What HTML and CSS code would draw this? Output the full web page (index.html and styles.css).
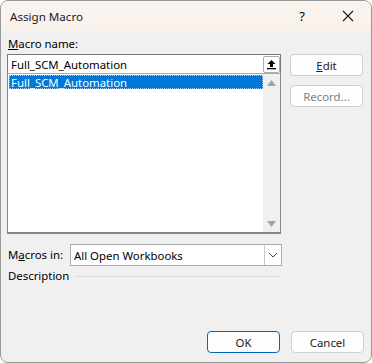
FILE: index.html
```html
<!DOCTYPE html>
<html lang="en">
<head>
    <meta charset="UTF-8">
    <title>Assign Macro</title>
    <link rel="stylesheet" href="styles.css">
</head>
<body>
    <div class="window">
        <div class="titlebar">
            <span class="title">Assign Macro</span>
            <span class="help">?</span>
            <span class="close">
                <svg width="12" height="12" viewBox="0 0 12 12">
                    <path d="M1 1 L11 11 M11 1 L1 11" stroke="#1a1a1a" stroke-width="1.1" fill="none"/>
                </svg>
            </span>
        </div>

        <div class="content">
            <div class="main">
                <div class="left">
                    <div class="label"><u>M</u>acro name:</div>
                    <div class="textbox">
                        <span class="value">Full_SCM_Automation</span>
                        <span class="up-btn">
                            <svg width="11" height="11" viewBox="0 0 11 11">
                                <path d="M5.5 1 L1.5 5 H4 V8 H7 V5 H9.5 Z" fill="#000"/>
                                <rect x="1" y="9" width="9" height="1.3" fill="#000"/>
                            </svg>
                        </span>
                    </div>
                    <div class="listbox">
                        <div class="items">
                            <div class="item selected"><span>Full_SCM_Automation</span></div>
                        </div>
                        <div class="scrollbar">
                            <svg width="9" height="6" viewBox="0 0 9 6"><path d="M4.5 0 L9 6 H0 Z" fill="#a3a3a3"/></svg>
                            <svg width="9" height="6" viewBox="0 0 9 6"><path d="M0 0 H9 L4.5 6 Z" fill="#a3a3a3"/></svg>
                        </div>
                    </div>
                </div>
                <div class="right">
                    <button class="btn"><u>E</u>dit</button>
                    <button class="btn disabled">Record...</button>
                </div>
            </div>

            <div class="macros-in">
                <span class="label">M<u>a</u>cros in:</span>
                <div class="select">
                    <span class="value">All Open Workbooks</span>
                    <span class="drop">
                        <svg width="10" height="6" viewBox="0 0 10 6"><path d="M1 1 L5 5 L9 1" stroke="#444" stroke-width="1" fill="none"/></svg>
                    </span>
                </div>
            </div>

            <div class="description">
                <span class="label">Description</span>
                <span class="rule"></span>
            </div>

            <div class="footer">
                <button class="btn default">OK</button>
                <button class="btn">Cancel</button>
            </div>
        </div>
    </div>
</body>
</html>
```

FILE: styles.css
```css
html, body {
    margin: 0;
    padding: 0;
    background-color: #ffffff;
}

body {
    font-family: "Noto Sans", "Open Sans", sans-serif;
    font-size: 11.4px;
    color: #000;
}

u {
    text-decoration: underline;
    text-underline-offset: 1px;
}

.window {
    width: 372px;
    height: 363px;
    box-sizing: border-box;
    border: 1px solid #9a9a9a;
    border-radius: 8px;
    overflow: hidden;
    background-color: #f0f0f0;
    display: flex;
    flex-direction: column;
}

.titlebar {
    height: 30px;
    flex: none;
    background-color: #faf3ed;
    display: flex;
    align-items: center;
}

.title {
    flex: 1;
    padding-left: 9px;
    font-size: 11.6px;
    color: #1a1a1a;
}

.help {
    width: 46px;
    text-align: center;
    font-size: 13px;
}

.close {
    width: 46px;
    display: flex;
    justify-content: center;
}

.content {
    flex: 1;
    display: flex;
    flex-direction: column;
    padding: 0 7px 0 6px;
}

.main {
    display: flex;
    gap: 9px;
    margin-top: 5px;
}

.left {
    width: 274px;
}

.label {
    line-height: 16px;
    padding-left: 1px;
}

.left .label {
    margin-bottom: 2px;
}

.textbox {
    height: 20px;
    box-sizing: border-box;
    border: 1px solid #7a7a7a;
    border-bottom-color: #aaaaaa;
    background-color: #fff;
    display: flex;
    align-items: center;
    justify-content: space-between;
    padding-left: 3px;
}

.up-btn {
    width: 17px;
    height: 17px;
    box-sizing: border-box;
    border: 1px solid #adadad;
    border-radius: 2px;
    background-color: #fff;
    display: flex;
    align-items: center;
    justify-content: center;
}

.listbox {
    height: 160px;
    box-sizing: border-box;
    border-left: 1px solid #828790;
    border-bottom: 2px solid #828790;
    border-right: 1px solid #828790;
    background-color: #fff;
    display: flex;
}

.items {
    flex: 1;
    padding: 1px 0 0 1px;
}

.item {
    height: 14px;
    line-height: 13px;
    padding-left: 1px;
    box-sizing: border-box;
}

.item.selected {
    background-color: #0078d7;
    color: #fff;
    border: 1px dotted #9cc7ee;
}

.scrollbar {
    width: 17px;
    background-color: #f0f0f0;
    display: flex;
    flex-direction: column;
    justify-content: space-between;
    align-items: center;
    padding: 6px 0 5px;
    box-sizing: border-box;
}

.right {
    width: 73px;
    display: flex;
    flex-direction: column;
    gap: 9px;
    padding-top: 18px;
}

.btn {
    height: 22px;
    width: 73px;
    box-sizing: border-box;
    border: 1px solid #d0d0d0;
    border-radius: 4px;
    background-color: #fdfdfd;
    font-family: inherit;
    font-size: 11.4px;
    color: #1a1a1a;
    padding: 0;
}

.btn.disabled {
    color: #808080;
}

.btn.default {
    border-color: #0067c0;
}

.macros-in {
    display: flex;
    align-items: center;
    margin-top: 10px;
}

.macros-in .label {
    width: 62px;
}

.select {
    width: 212px;
    height: 22px;
    box-sizing: border-box;
    border: 1px solid #aaaaaa;
    background-color: #fff;
    display: flex;
    align-items: center;
    justify-content: space-between;
    padding-left: 3px;
}

.drop {
    width: 16px;
    height: 20px;
    border-left: 1px solid #c8c8c8;
    display: flex;
    align-items: center;
    justify-content: center;
}

.description {
    width: 274px;
    display: flex;
    align-items: center;
    margin-top: 2px;
}

.description .rule {
    flex: 1;
    height: 1px;
    margin-left: 7px;
    background-color: #dadada;
}

.footer {
    margin-top: auto;
    margin-bottom: 9px;
    display: flex;
    justify-content: flex-end;
    gap: 11px;
}
```
